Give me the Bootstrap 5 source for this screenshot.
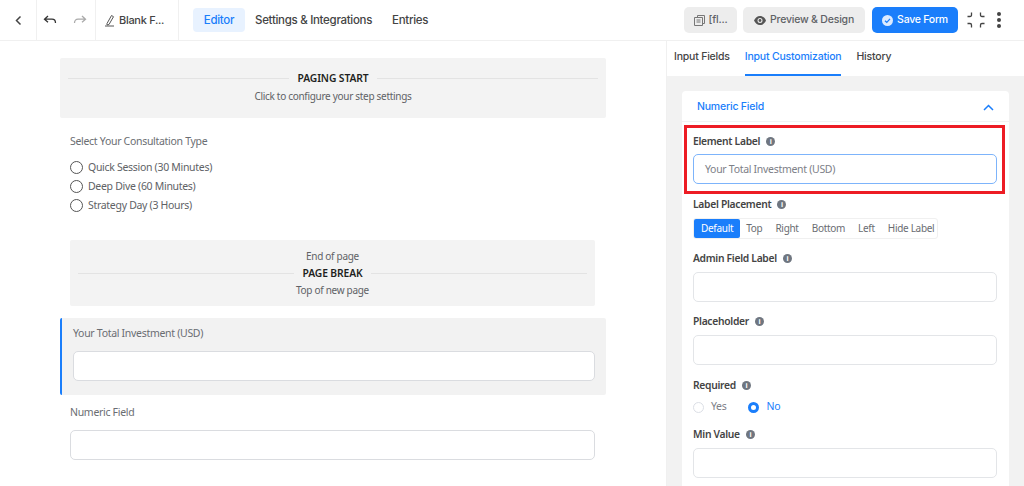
<!DOCTYPE html>
<html lang="en">
<head>
    <meta charset="UTF-8">
    <meta name="viewport" content="width=device-width, initial-scale=1.0">
    <title>Blank Form</title>
    <link href="https://cdn.jsdelivr.net/npm/bootstrap@5.3.0/dist/css/bootstrap.min.css" rel="stylesheet">
    <style>
        html, body { height: 486px; overflow: hidden; }
        body { font-family: "Noto Sans", sans-serif; font-size: 10.5px; letter-spacing: -.3px; color: #606266; background: #fff; }

        /* top bar */
        .top-bar { height: 41px; border-bottom: 1px solid #f0f0f0; font-family: Inter, sans-serif; }
        .bar-cell { height: 40px; border-right: 1px solid #f0f0f0; color: #444; }
        .back-cell { width: 37px; padding-left: 14px; }
        .history-cell { width: 59px; padding-left: 6px; gap: 16px; }
        .title-cell { width: 83px; padding-left: 8px; gap: 3px; font-size: 11px; font-weight: 500; white-space: nowrap; }
        .top-tabs { padding-left: 14px; }
        .top-tab { padding: 0 10px; height: 24px; line-height: 24px; font-size: 11.5px; letter-spacing: -.3px; font-weight: 500; color: #444; border-radius: 4px; text-decoration: none; }
        .top-tab.on { width: 52px; text-align: center; background: #e8f2ff; color: #1a7efb; }
        .top-actions { margin-right: 22px; }
        .grey-btn { height: 26px; background: #ededed; color: #606266; border-radius: 5px; font-size: 10.5px; letter-spacing: -.2px; font-weight: 500; gap: 4px; padding: 0; border: 0; }
        .copy-btn { width: 53px; }
        .preview-btn { width: 122px; margin-left: 6px; }
        .save-btn { width: 86px; height: 26px; margin-left: 7px; background: #1a7efb; color: #fff; border: 0; border-radius: 5px; font-size: 10.5px; letter-spacing: -.25px; font-weight: 500; gap: 4px; padding: 0; }
        .expand-icon { margin-left: 8px; }
        .dots-icon { margin-left: 10px; }

        /* left canvas */
        .canvas-col { width: 666px; height: 445px; padding: 17px 60px 0; }
        .grey-box { background: #f3f3f3; border-radius: 2px; text-align: center; }
        .rule-row { gap: 8px; color: #1e1f21; font-size: 10.3px; letter-spacing: -.1px; font-weight: 600; line-height: 14px; }
        .rule-row::before, .rule-row::after { content: ""; flex: 1; height: 1px; background: #e3e3e3; }
        .paging-box { height: 60px; padding: 13px 8px 0; }
        .paging-box p { margin: 4px 0 0; line-height: 14px; font-size: 10px; }
        .field-pad { padding: 15px 11px 0 10px; }
        .field-pad.tight { padding-top: 9px; }
        .field-title { line-height: 16px; color: #6a6d72; }
        .radio-list { margin-top: 9px; }
        .radio-row { line-height: 19px; gap: 5px; color: #606266; }
        .radio-ring { width: 13px; height: 13px; border: 1px solid #555; border-radius: 50%; }
        .break-box { height: 66px; padding-top: 8px; margin: 25px 11px 0 10px; line-height: 17px; font-size: 10px; }
        .break-box .rule-row { padding: 0 8px; line-height: 17px; }
        .active-field { height: 77px; margin-top: 12px; padding: 7px 11px 0 11px; background: #f2f2f2; border-left: 2px solid #1a7efb; border-radius: 2px; }
        .plain-input { height: 30px; margin-top: 10px; background: #fff; border: 1px solid #dadce0; border-radius: 5px; }

        /* right panel */
        .side-col { width: 358px; height: 445px; border-left: 1px solid #f0f0f0; background: #f2f2f2; overflow: hidden; }
        .side-tabs { height: 35px; background: #fff; padding-left: 7px; gap: 15px; font-family: Inter, sans-serif; }
        .side-tab { height: 35px; line-height: 32px; font-size: 10.5px; letter-spacing: -.2px; font-weight: 500; color: #444; text-decoration: none; }
        .side-tab.on { color: #1a7efb; border-bottom: 2px solid #1a7efb; }
        .side-card { margin: 15px 15px 0; background: #fff; border-radius: 4px 4px 0 0; height: 420px; }
        .card-top { height: 31px; padding: 2px 15px 0; color: #1a7efb; font-weight: 500; font-size: 10.5px; letter-spacing: -.2px; font-family: Inter, sans-serif; border-bottom: 1px solid #f2f2f2; }
        .red-frame { margin: 3px 4px 0 2px; padding: 6px 5px 0 6px; height: 69px; border: 3px solid #ed1c24; }
        .opt-label { font-size: 10.3px; font-weight: 600; color: #444; line-height: 14px; gap: 6px; }
        .info-dot { width: 9px; height: 9px; border-radius: 50%; background: #6f7680; color: #fff; font-size: 7px; line-height: 9px; text-align: center; font-weight: 700; }
        .side-input { height: 30px; margin-top: 7px; background: #fff; border: 1px solid #e3e5e8; border-radius: 5px; padding: 0 11px; line-height: 28px; color: #7d8087; }
        .side-input.focused { border-color: #7db4fb; margin-top: 6px; }
        .opt-group { padding: 12px 12px 0 11px; }
        .opt-group.first { padding-top: 3px; }
        .opt-group.roomy { padding-top: 13px; }
        .seg-wrap { width: 245px; height: 21px; margin-top: 7px; border: 1px solid #f0f0f0; border-radius: 3px; font-size: 10px; letter-spacing: -.3px; color: #6a6d72; white-space: nowrap; }
        .seg-item { padding: 0 7px 0 6px; line-height: 19px; }
        .seg-item.on { padding: 0 7px; background: #1a7efb; color: #fff; border-radius: 2px; }
        .yes-dot { width: 11px; height: 11px; border: 1px solid #dcdfe6; border-radius: 50%; }
        .no-dot { width: 11px; height: 11px; border: 3.5px solid #1a7efb; border-radius: 50%; margin-left: 15px; }
        .choice-row { height: 16px; margin-top: 7px; gap: 7px; }
        .choice-yes { color: #7d8087; }
        .choice-no { color: #1a7efb; }
    </style>
</head>
<body>
    <!-- top bar -->
    <div class="top-bar d-flex align-items-center">
        <div class="bar-cell back-cell d-flex align-items-center">
            <svg width="9" height="11" viewBox="0 0 9 11" fill="none" stroke="#444" stroke-width="1.5"><path d="M6.5 1.5 2.5 5.5l4 4"/></svg>
        </div>
        <div class="bar-cell history-cell d-flex align-items-center">
            <svg width="14" height="11" viewBox="0 0 14 11" fill="none" stroke="#333" stroke-width="1.3"><path d="M5 1 1.5 4.2 5 7.2M1.5 4.2h7.5c2 0 3.500 1.300 3.500 3.800"/></svg>
            <svg width="14" height="11" viewBox="0 0 14 11" fill="none" stroke="#aaa" stroke-width="1.3"><path d="M9 1l3.500 3.200L9 7.200M12.500 4.200H5C3 4.200 1.500 5.500 1.500 8"/></svg>
        </div>
        <div class="bar-cell title-cell d-flex align-items-center">
            <svg width="12" height="13" viewBox="0 0 12 13" fill="none" stroke="#555" stroke-width="1"><path d="M3 9.500 7.500 1.500l2 1.200L5 10.500l-2 .5zM1 12h9"/></svg>
            <span>Blank F...</span>
        </div>
        <div class="top-tabs d-flex align-items-center">
            <a class="top-tab on" href="#">Editor</a>
            <a class="top-tab" href="#">Settings &amp; Integrations</a>
            <a class="top-tab" href="#">Entries</a>
        </div>
        <div class="top-actions ms-auto d-flex align-items-center">
            <button class="grey-btn copy-btn d-flex align-items-center justify-content-center" type="button">
                <svg width="11" height="11" viewBox="0 0 11 11" fill="none" stroke="#777" stroke-width="1"><path d="M3.500 2.500V.5h7v8H8.500M.5 2.500h8v8h-8zM2.500 5h4M2.500 7h4"/></svg>
                <span>[fl...</span>
            </button>
            <button class="grey-btn preview-btn d-flex align-items-center justify-content-center" type="button">
                <svg width="12" height="9" viewBox="0 0 12 9"><path fill="#555" d="M6 0C3.300 0 1.200 1.800 0 4.500 1.200 7.200 3.300 9 6 9s4.800-1.800 6-4.500C10.800 1.800 8.700 0 6 0zm0 7a2.500 2.500 0 1 1 0-5 2.500 2.500 0 0 1 0 5z"/><circle cx="6" cy="4.500" r="1.400" fill="#555"/></svg>
                <span>Preview &amp; Design</span>
            </button>
            <button class="save-btn d-flex align-items-center justify-content-center" type="button">
                <svg width="11" height="11" viewBox="0 0 11 11"><circle cx="5.500" cy="5.500" r="5.500" fill="#dcebff"/><path d="M3 5.700 4.800 7.400 8 3.900" fill="none" stroke="#1a7efb" stroke-width="1.300"/></svg>
                <span>Save Form</span>
            </button>
            <svg class="expand-icon" width="20" height="18" viewBox="0 0 20 18" fill="none" stroke="#444" stroke-width="1.300"><path d="M5.500 1.500V4q0 1.500-1.500 1.500H1.500M14.500 1.500V4q0 1.500 1.500 1.500h2.500M5.500 16.500V14q0-1.500-1.500-1.500H1.500M14.500 16.500V14q0-1.500 1.500-1.500h2.500"/></svg>
            <svg class="dots-icon" width="6" height="16" viewBox="0 0 6 16" fill="#444"><circle cx="3" cy="2" r="2"/><circle cx="3" cy="8" r="2"/><circle cx="3" cy="14" r="2"/></svg>
        </div>
    </div>

    <div class="d-flex">
        <!-- form canvas -->
        <div class="canvas-col">
            <div class="grey-box paging-box">
                <div class="rule-row d-flex align-items-center"><span>PAGING START</span></div>
                <p>Click to configure your step settings</p>
            </div>

            <div class="field-pad">
                <div class="field-title">Select Your Consultation Type</div>
                <div class="radio-list">
                    <div class="radio-row d-flex align-items-center"><span class="radio-ring"></span><span>Quick Session (30 Minutes)</span></div>
                    <div class="radio-row d-flex align-items-center"><span class="radio-ring"></span><span>Deep Dive (60 Minutes)</span></div>
                    <div class="radio-row d-flex align-items-center"><span class="radio-ring"></span><span>Strategy Day (3 Hours)</span></div>
                </div>
            </div>

            <div class="grey-box break-box">
                <div>End of page</div>
                <div class="rule-row d-flex align-items-center"><span>PAGE BREAK</span></div>
                <div>Top of new page</div>
            </div>

            <div class="active-field">
                <div class="field-title">Your Total Investment (USD)</div>
                <div class="plain-input"></div>
            </div>

            <div class="field-pad tight">
                <div class="field-title">Numeric Field</div>
                <div class="plain-input"></div>
            </div>
        </div>

        <!-- settings panel -->
        <div class="side-col">
            <div class="side-tabs d-flex">
                <a class="side-tab" href="#">Input Fields</a>
                <a class="side-tab on" href="#">Input Customization</a>
                <a class="side-tab" href="#">History</a>
            </div>
            <div class="side-card">
                <div class="card-top d-flex align-items-center justify-content-between">
                    <span>Numeric Field</span>
                    <svg width="11" height="7" viewBox="0 0 11 7" fill="none" stroke="#1a7efb" stroke-width="1.500"><path d="M1 6l4.500-4.500L10 6"/></svg>
                </div>
                <div class="red-frame">
                    <div class="opt-label d-flex align-items-center"><span>Element Label</span><span class="info-dot">i</span></div>
                    <div class="side-input focused">Your Total Investment (USD)</div>
                </div>
                <div class="opt-group first">
                    <div class="opt-label d-flex align-items-center"><span>Label Placement</span><span class="info-dot">i</span></div>
                    <div class="seg-wrap d-flex">
                        <span class="seg-item on">Default</span><span class="seg-item">Top</span><span class="seg-item">Right</span><span class="seg-item">Bottom</span><span class="seg-item">Left</span><span class="seg-item">Hide Label</span>
                    </div>
                </div>
                <div class="opt-group">
                    <div class="opt-label d-flex align-items-center"><span>Admin Field Label</span><span class="info-dot">i</span></div>
                    <div class="side-input"></div>
                </div>
                <div class="opt-group">
                    <div class="opt-label d-flex align-items-center"><span>Placeholder</span><span class="info-dot">i</span></div>
                    <div class="side-input"></div>
                </div>
                <div class="opt-group roomy">
                    <div class="opt-label d-flex align-items-center"><span>Required</span><span class="info-dot">i</span></div>
                    <div class="choice-row d-flex align-items-center">
                        <span class="yes-dot"></span><span class="choice-yes">Yes</span>
                        <span class="no-dot"></span><span class="choice-no">No</span>
                    </div>
                </div>
                <div class="opt-group">
                    <div class="opt-label d-flex align-items-center"><span>Min Value</span><span class="info-dot">i</span></div>
                    <div class="side-input"></div>
                </div>
            </div>
        </div>
    </div>
    <script src="https://cdn.jsdelivr.net/npm/bootstrap@5.3.0/dist/js/bootstrap.bundle.min.js"></script>
</body>
</html>
